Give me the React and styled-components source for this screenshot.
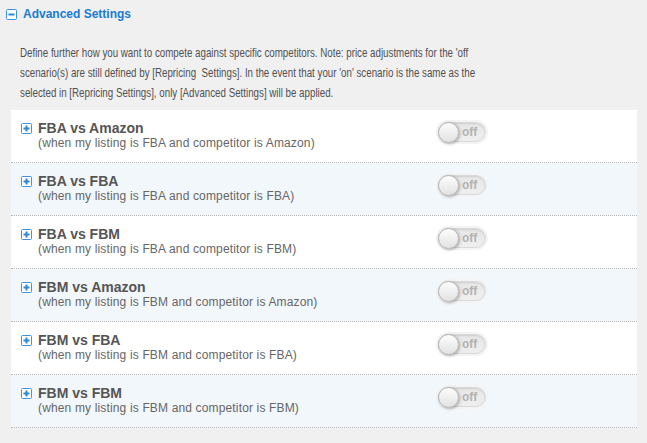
import React from "react";
import styled, { createGlobalStyle } from "styled-components";

const Global = createGlobalStyle`
  html, body { margin: 0; padding: 0; background: #f0f0f0; }
  body { font-family: "Liberation Sans", Arial, sans-serif; }
`;

const Page = styled.div`
  width: 647px;
  height: 443px;
  overflow: hidden;
  box-sizing: border-box;
  padding: 8px 10px 0 0;
`;

const Header = styled.div`
  display: flex;
  align-items: center;
  gap: 6px;
  padding-left: 6px;
  height: 12px;
`;

const HeaderTitle = styled.span`
  font-size: 12px;
  font-weight: bold;
  color: #1a7bd0;
  line-height: 12px;
`;

const Description = styled.p`
  margin: 23px 0 0 20px;
  font-size: 13px;
  line-height: 20px;
  color: #505050;
  white-space: nowrap;
  transform: scaleX(0.75);
  transform-origin: left top;
`;

const Panel = styled.div`
  margin: 7px 0 0 11px;
  width: 626px;
`;

const Row = styled.div`
  display: grid;
  grid-template-columns: 417px auto;
  height: 52px;
  box-sizing: content-box;
  padding-left: 10px;
  background: ${(p) => (p.$alt ? "#f2f7fb" : "#ffffff")};
  border-bottom: 1px dotted #b8b8b8;
`;

const Left = styled.div`
  display: flex;
  align-items: flex-start;
  gap: 6px;
  padding-top: 13px;
`;

const Texts = styled.div`
  display: flex;
  flex-direction: column;
  margin-top: -3px;
`;

const Title = styled.div`
  font-size: 14px;
  font-weight: bold;
  color: #555;
  line-height: 16px;
`;

const Sub = styled.div`
  font-size: 12px;
  letter-spacing: 0.15px;
  color: #666;
  line-height: 15px;
`;

const Toggle = styled.div`
  margin-top: 12px;
  width: 48px;
  height: 20px;
  box-sizing: border-box;
  border-radius: 11px;
  background: linear-gradient(#e6e6e6, #efefef);
  border: 1px solid #d9d9d9;
  box-shadow: 0 0 0 2px #f4f4f4, inset 0 1px 2px rgba(0, 0, 0, 0.1);
  display: flex;
  align-items: center;
`;

const Knob = styled.div`
  width: 21px;
  height: 21px;
  margin-left: -1px;
  box-sizing: border-box;
  border-radius: 50%;
  border: 1px solid #b4b4b4;
  background: linear-gradient(#fdfdfd, #e2e2e2);
  box-shadow: 1px 1px 3px rgba(0, 0, 0, 0.3);
  flex-shrink: 0;
`;

const ToggleLabel = styled.span`
  margin-left: 3px;
  font-size: 12px;
  font-weight: bold;
  color: #b3b3b3;
`;

const SquareIcon = ({ plus }) => (
  <svg width="11" height="11" viewBox="0 0 11 11" style={{ flexShrink: 0 }}>
    <rect x="0.5" y="0.5" width="10" height="10" rx="1" fill="#fff" stroke="#3b95e0" />
    <rect x="2.5" y="4.5" width="6" height="2" fill="#2d8ad8" />
    {plus && <rect x="4.5" y="2.5" width="2" height="6" fill="#2d8ad8" />}
  </svg>
);

const rows = [
  ["FBA vs Amazon", "FBA", "Amazon"],
  ["FBA vs FBA", "FBA", "FBA"],
  ["FBA vs FBM", "FBA", "FBM"],
  ["FBM vs Amazon", "FBM", "Amazon"],
  ["FBM vs FBA", "FBM", "FBA"],
  ["FBM vs FBM", "FBM", "FBM"],
];

export default function App() {
  return (
    <Page>
      <Global />
      <Header>
        <SquareIcon />
        <HeaderTitle>Advanced Settings</HeaderTitle>
      </Header>
      <Description>
        Define further how you want to compete against specific competitors. Note: price adjustments for the 'off
        <br />
        scenario(s) are still defined by [Repricing&nbsp; Settings]. In the event that your 'on' scenario is the same as the
        <br />
        selected in [Repricing Settings], only [Advanced Settings] will be applied.
      </Description>
      <Panel>
        {rows.map(([t, mine, comp], i) => (
          <Row key={t} $alt={i % 2 === 1}>
            <Left>
              <SquareIcon plus />
              <Texts>
                <Title>{t}</Title>
                <Sub>(when my listing is {mine} and competitor is {comp})</Sub>
              </Texts>
            </Left>
            <div>
              <Toggle>
                <Knob />
                <ToggleLabel>off</ToggleLabel>
              </Toggle>
            </div>
          </Row>
        ))}
      </Panel>
    </Page>
  );
}
